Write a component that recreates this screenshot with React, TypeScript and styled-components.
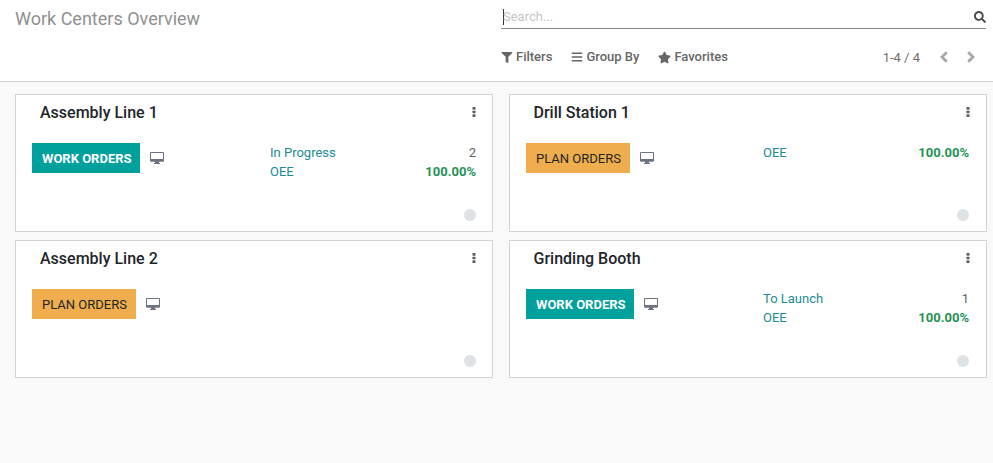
import React from 'react';
import styled, { createGlobalStyle } from 'styled-components';
import { FaBars, FaFilter, FaSearch, FaStar } from 'react-icons/fa';

type Stat = { label: string; value: string; good?: boolean };
type Center = { name: string; action: 'work' | 'plan'; stats: Stat[] };

const centers: Center[] = [
  {
    name: 'Assembly Line 1',
    action: 'work',
    stats: [
      { label: 'In Progress', value: '2' },
      { label: 'OEE', value: '100.00%', good: true },
    ],
  },
  {
    name: 'Drill Station 1',
    action: 'plan',
    stats: [{ label: 'OEE', value: '100.00%', good: true }],
  },
  { name: 'Assembly Line 2', action: 'plan', stats: [] },
  {
    name: 'Grinding Booth',
    action: 'work',
    stats: [
      { label: 'To Launch', value: '1' },
      { label: 'OEE', value: '100.00%', good: true },
    ],
  },
];

const MonitorIcon = () => (
  <svg width="14" height="12" viewBox="0 0 15 13" preserveAspectRatio="none">
    <path
      fillRule="evenodd"
      d="M1 0h13a1 1 0 0 1 1 1v8.6a1 1 0 0 1-1 1H9.4l.3 1.4h1V13H4.3v-1h1l.3-1.4H1a1 1 0 0 1-1-1V1a1 1 0 0 1 1-1zm.1 1.1v6.6h12.8V1.1z"
    />
  </svg>
);

const DotsIcon = () => (
  <svg width="4" height="10" viewBox="0 0 4 11" preserveAspectRatio="none">
    <rect x="0.5" y="0" width="3" height="3" rx="0.6" />
    <rect x="0.5" y="4" width="3" height="3" rx="0.6" />
    <rect x="0.5" y="8" width="3" height="3" rx="0.6" />
  </svg>
);

const ChevronIcon: React.FC<{ dir: 'left' | 'right' }> = ({ dir }) => (
  <svg width="8" height="12" viewBox="0 0 8 12">
    <path
      d={dir === 'left' ? 'M6.8 1.2 2 6l4.8 4.8' : 'M1.2 1.2 6 6l-4.8 4.8'}
      fill="none"
      stroke="currentColor"
      strokeWidth="2.8"
    />
  </svg>
);

const App: React.FC = () => {
  return (
    <>
      <GlobalStyle />
      <Page>
        <ControlPanel>
          <Title>Work Centers Overview</Title>
          <Controls>
            <SearchBar>
              <Caret />
              <Placeholder>Search...</Placeholder>
              <SearchIcon>
                <FaSearch />
              </SearchIcon>
            </SearchBar>
            <Toolbar>
              <FilterGroup>
                <FilterButton>
                  <FaFilter size={11} />
                  Filters
                </FilterButton>
                <FilterButton>
                  <FaBars size={12} />
                  Group By
                </FilterButton>
                <FilterButton>
                  <FaStar size={13} />
                  Favorites
                </FilterButton>
              </FilterGroup>
              <Pager>
                <PagerValue>1-4 / 4</PagerValue>
                <PagerArrow>
                  <ChevronIcon dir="left" />
                </PagerArrow>
                <PagerArrow>
                  <ChevronIcon dir="right" />
                </PagerArrow>
              </Pager>
            </Toolbar>
          </Controls>
        </ControlPanel>

        <Board>
          {centers.map((center) => (
            <Card key={center.name}>
              <CardHead>
                <CardName>{center.name}</CardName>
                <CardMenu>
                  <DotsIcon />
                </CardMenu>
              </CardHead>
              <CardBody>
                <ActionSide>
                  <ActionButton $kind={center.action}>
                    {center.action === 'work' ? 'Work Orders' : 'Plan Orders'}
                  </ActionButton>
                  <Monitor>
                    <MonitorIcon />
                  </Monitor>
                </ActionSide>
                <StatSide>
                  {center.stats.map((stat) => (
                    <StatRow key={stat.label}>
                      <StatLabel>{stat.label}</StatLabel>
                      <StatValue $good={stat.good}>{stat.value}</StatValue>
                    </StatRow>
                  ))}
                </StatSide>
              </CardBody>
              <StatusDot />
            </Card>
          ))}
        </Board>
      </Page>
    </>
  );
};

const GlobalStyle = createGlobalStyle`
  html, body {
    margin: 0;
    padding: 0;
    background: #f9f9f9;
  }

  body {
    font-family: Roboto, "Noto Sans", sans-serif;
    font-size: 13px;
    color: #4c4c4c;
  }
`;

const Page = styled.div`
  width: 993px;
  height: 463px;
  overflow: hidden;
  background: #f9f9f9;
`;

const ControlPanel = styled.div`
  box-sizing: border-box;
  height: 82px;
  display: flex;
  background: #fff;
  border-bottom: 1px solid #ced4da;
  padding: 0 7px 0 15px;
`;

const Title = styled.div`
  width: 486px;
  padding-top: 8px;
  font-size: 18px;
  line-height: 22px;
  color: #8f8f8f;
`;

const Controls = styled.div`
  flex: 1;
  display: flex;
  flex-direction: column;
`;

const SearchBar = styled.div`
  box-sizing: border-box;
  height: 29px;
  padding-top: 9px;
  display: flex;
  align-items: flex-start;
  border-bottom: 1px solid #8a8a8a;
`;

const Caret = styled.div`
  width: 1px;
  height: 16px;
  margin-left: 2px;
  background: #333;
`;

const Placeholder = styled.span`
  flex: 1;
  margin-left: -1px;
  font-size: 13px;
  line-height: 16px;
  color: #c4c4c4;
`;

const SearchIcon = styled.span`
  display: flex;
  padding-top: 2px;
  font-size: 12px;
  color: #4c4c4c;
`;

const Toolbar = styled.div`
  display: flex;
  align-items: center;
  justify-content: space-between;
  margin-top: 19px;
  height: 18px;
`;

const FilterGroup = styled.div`
  display: flex;
  gap: 19px;
`;

const FilterButton = styled.div`
  display: flex;
  align-items: center;
  gap: 3px;
  font-size: 13px;
  font-weight: 500;
  line-height: 18px;
  color: #666;

  svg {
    flex: 0 0 12px;
  }

  &:last-child svg {
    flex-basis: 13px;
  }
`;

const Pager = styled.div`
  display: flex;
  align-items: center;
  padding-right: 11px;
`;

const PagerValue = styled.span`
  font-size: 13px;
  color: #7a6a5f;
  margin-right: 20px;
`;

const PagerArrow = styled.span`
  display: flex;
  color: #a8a8a8;

  & + & {
    margin-left: 19px;
  }
`;

const Board = styled.div`
  display: grid;
  grid-template-columns: 478px 478px;
  grid-auto-rows: 138px;
  column-gap: 16px;
  row-gap: 8px;
  padding: 12px 0 0 15px;
`;

const CardHead = styled.div`
  display: flex;
  align-items: center;
  justify-content: space-between;
  padding: 7px 16px 0 24px;
  height: 22px;
`;

const CardName = styled.div`
  font-size: 16px;
  font-weight: 500;
  line-height: 22px;
  color: #212529;
`;

const CardMenu = styled.span`
  display: flex;
  margin-bottom: 2px;
  color: #5f5f5f;
  fill: currentColor;
`;

const CardBody = styled.div`
  display: flex;
  justify-content: space-between;
  padding: 19px 16px 0 16px;
`;

const StatusDot = styled.span`
  position: absolute;
  right: 16px;
  bottom: 10px;
  width: 12px;
  height: 12px;
  border-radius: 50%;
  background: #dee2e6;
`;

const Card = styled.div`
  position: relative;
  box-sizing: border-box;
  background: #fff;
  border: 1px solid #ced4da;

  &:nth-child(even) ${CardBody} {
    padding-right: 17px;
  }

  &:nth-child(even) ${CardName} {
    margin-left: -0.5px;
  }

  &:nth-child(even) ${StatusDot} {
    right: 17px;
  }
`;

const ActionSide = styled.div`
  display: flex;
  align-items: center;
  gap: 10px;
  height: 30px;
`;

const ActionButton = styled.div<{ $kind: 'work' | 'plan' }>`
  height: 30px;
  padding: 0 ${(p) => (p.$kind === 'work' ? 8 : 9)}px 0 10px;
  display: flex;
  align-items: center;
  font-size: 13px;
  text-transform: uppercase;
  font-weight: ${(p) => (p.$kind === 'work' ? 700 : 400)};
  background: ${(p) => (p.$kind === 'work' ? '#00a09d' : '#f0ad4e')};
  color: ${(p) => (p.$kind === 'work' ? '#fff' : '#212529')};
`;

const Monitor = styled.span`
  display: flex;
  color: #6c7280;
  fill: currentColor;
`;

const StatSide = styled.div`
  width: 206px;
  display: flex;
  flex-direction: column;
`;

const StatRow = styled.div`
  display: flex;
  justify-content: space-between;
  height: 19px;
  line-height: 19px;
`;

const StatLabel = styled.span`
  color: #1c8a92;
  font-size: 13px;
`;

const StatValue = styled.span<{ $good?: boolean }>`
  font-size: 13px;
  font-weight: ${(p) => (p.$good ? 700 : 400)};
  color: ${(p) => (p.$good ? '#1f9255' : '#5f5f5f')};
`;

export default App;
